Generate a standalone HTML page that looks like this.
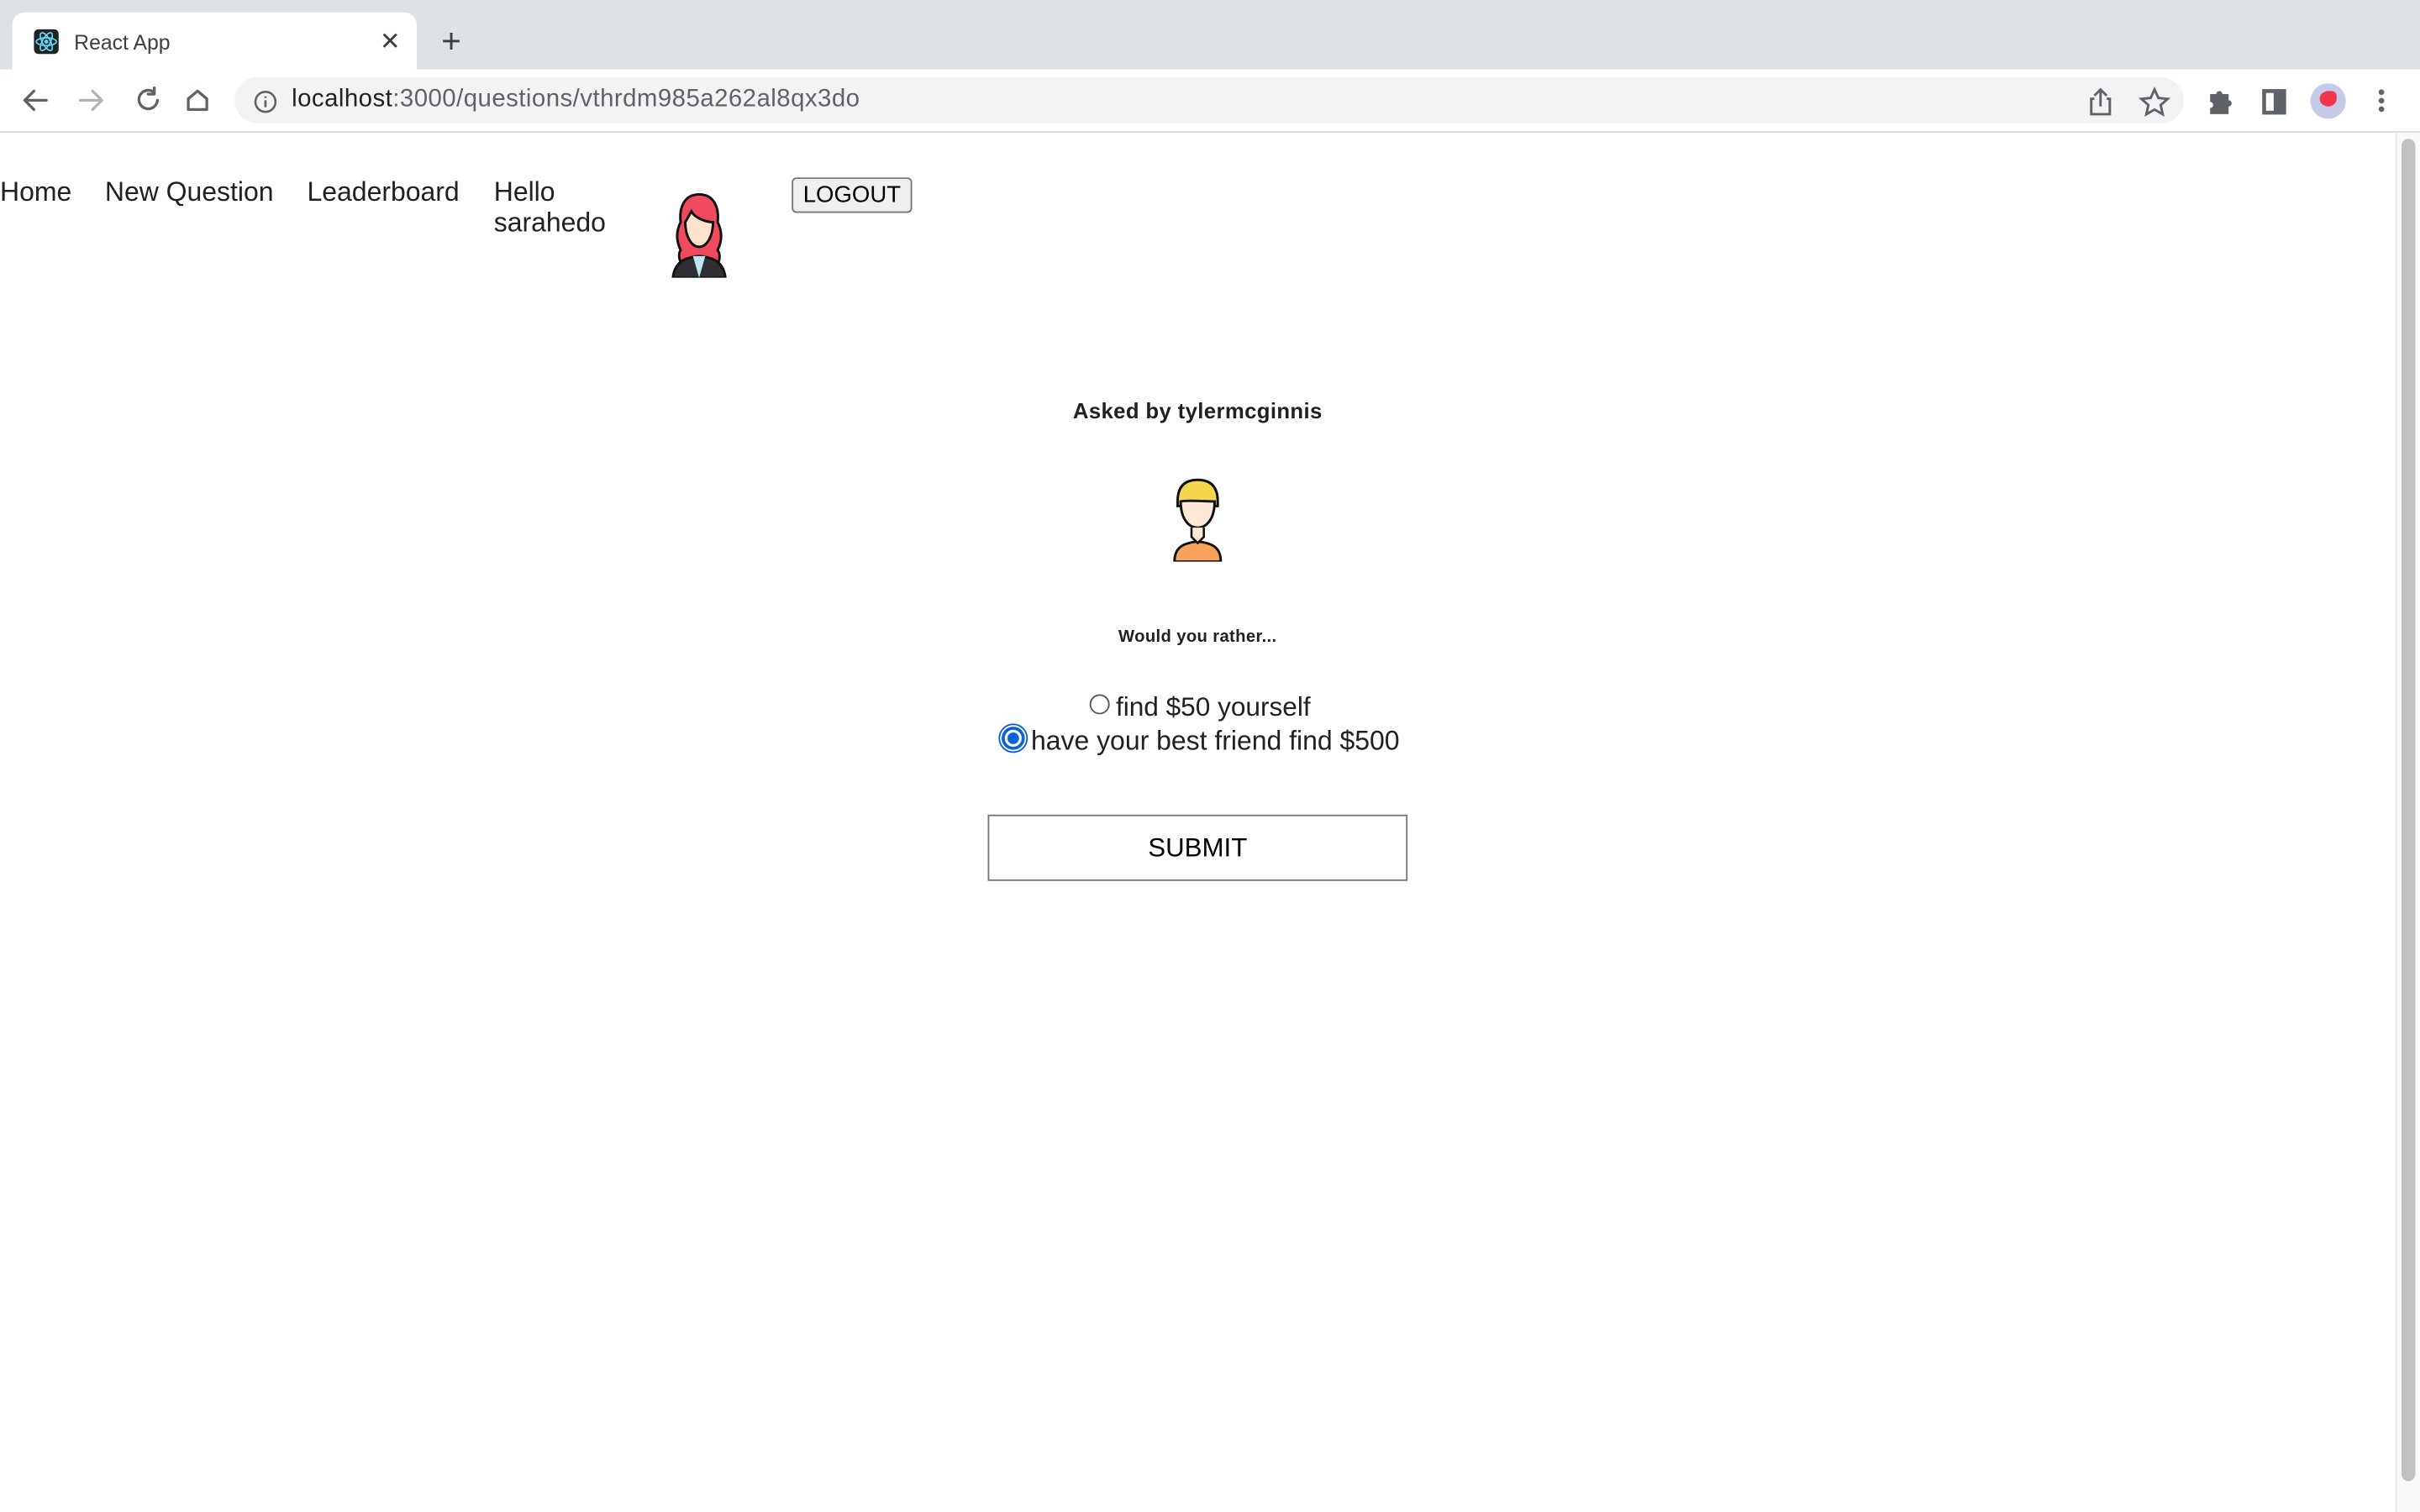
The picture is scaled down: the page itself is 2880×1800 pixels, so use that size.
<!DOCTYPE html>
<html><head><meta charset="utf-8"><style>
html,body{margin:0;padding:0;width:2880px;height:1800px;overflow:hidden;background:#fff}
#w{width:1568px;height:980px;transform:scale(1.836735);transform-origin:0 0;position:relative;font-family:"Liberation Sans",sans-serif;color:#202124}
.a{position:absolute;white-space:nowrap}
</style></head><body><div id="w">
<div class="a" style="left:0;top:0;width:1568px;height:45px;background:#dee1e6"></div>
<div class="a" style="left:8px;top:8px;width:262px;height:37px;background:#fff;border-radius:8px 8px 0 0"></div>
<div class="a" style="left:22px;top:19px;width:16px;height:16px;background:#222;border-radius:3px"></div>
<svg class="a" style="left:22px;top:19px" width="16" height="16" viewBox="0 0 16 16"><g fill="none" stroke="#61dafb" stroke-width="0.9"><ellipse cx="8" cy="8" rx="6.5" ry="2.5"/><ellipse cx="8" cy="8" rx="6.5" ry="2.5" transform="rotate(60 8 8)"/><ellipse cx="8" cy="8" rx="6.5" ry="2.5" transform="rotate(120 8 8)"/></g><circle cx="8" cy="8" r="1.3" fill="#61dafb"/></svg>
<div class="a" style="left:48px;top:20px;font-size:13.5px;color:#3c4043">React App</div>
<div class="a" style="left:246px;top:17px;font-size:16px;color:#3c4043">✕</div>
<div class="a" style="left:286px;top:14px;font-size:22px;color:#3c4043">+</div>
<div class="a" style="left:152px;top:50px;width:1263px;height:30px;background:#f1f3f4;border-radius:15px"></div>
<svg class="a" style="left:12px;top:55px" width="130" height="20" viewBox="0 0 130 20" fill="none" stroke-width="1.8" stroke-linecap="round" stroke-linejoin="round"><path d="M18 10H5M10 4L4 10l6 6" stroke="#5f6368"/><path d="M40 10h13M48 4l6 6-6 6" stroke="#b0b3b8"/><path d="M88 5a6 6 0 1 0 2 5M88 2v4h-4" stroke="#5f6368"/><path d="M110 16v-7l6-5 6 5v7z" stroke="#5f6368"/></svg>
<svg class="a" style="left:164px;top:58px" width="16" height="16"><circle cx="8" cy="8" r="6.5" fill="none" stroke="#5f6368" stroke-width="1.4"/><path d="M8 7v4.5M8 4.5v1" stroke="#5f6368" stroke-width="1.5"/></svg>
<div class="a" style="left:189px;top:56px;font-size:16px;letter-spacing:0.25px;color:#202124">localhost<span style="color:#5f6368">:3000/questions/vthrdm985a262al8qx3do</span></div>
<svg class="a" style="left:1350px;top:55px" width="210" height="22" fill="none" stroke="#5f6368" stroke-width="1.6"><path d="M7 9H5v10h12V9h-2M11 14V3M7 7l4-4 4 4"/><path d="M46 3l2.5 5.5 6 .6-4.5 4 1.3 6-5.3-3.1-5.3 3.1 1.3-6-4.5-4 6-.6z"/><path d="M82 6h4a2 2 0 0 1 4 0h4v4a2 2 0 0 1 0 4v5H82v-4a2 2 0 0 0 0-4z" fill="#5f6368" stroke="none"/><rect x="117" y="4" width="13" height="14" stroke-width="2.5"/><rect x="124" y="4" width="6" height="14" fill="#5f6368"/></svg>
<div class="a" style="left:1497px;top:54px;width:23px;height:23px;border-radius:50%;background:#c5cae9"></div>
<div class="a" style="left:1503px;top:59px;width:11px;height:10px;border-radius:50% 30% 50% 50%;background:#f2354a"></div>
<div class="a" style="left:1541px;top:57px;width:4px;height:16px;background:radial-gradient(circle,#5f6368 1.6px,transparent 2px) 0 0/4px 5.5px"></div>
<div class="a" style="left:0;top:85px;width:1568px;height:1px;background:#dadce0"></div>
<div class="a" style="left:1552px;top:86px;width:16px;height:894px;background:#fafafa;border-left:1px solid #e8e8e8"></div>
<div class="a" style="left:1556px;top:90px;width:9px;height:870px;background:#c1c1c1;border-radius:5px"></div>
<div class="a" style="left:0;top:114px;font-size:17.4px">Home</div>
<div class="a" style="left:68px;top:114px;font-size:17.4px">New Question</div>
<div class="a" style="left:199px;top:114px;font-size:17.4px">Leaderboard</div>
<div class="a" style="left:320px;top:114px;font-size:17.4px;line-height:20px">Hello<br>sarahedo</div>
<svg class="a" style="left:430px;top:124px" width="46" height="56" viewBox="0 0 46 56"><path d="M23 2c-10 0-13 9-12 18-3 6-3 12 0 18-3 5 2 12 3 13h18c3-3 6-8 3-13 3-6 3-12 0-18 1-9-2-18-12-18z" fill="#f04a5e" stroke="#111" stroke-width="1.6"/><path d="M14 20c0 9 4 16 9 16s9-7 9-16c-5 0-12-3-14-7z" fill="#fde3cc" stroke="#111" stroke-width="1.6"/><path d="M6 56c1-9 6-13 17-14 11 1 16 5 17 14z" fill="#2e2e33" stroke="#111" stroke-width="1.6"/><path d="M19 42l4 14 4-14z" fill="#bfe6f2"/></svg>
<div class="a" style="left:513px;top:115px;width:76px;height:21px;border:1px solid #767676;border-radius:3px;background:#efefef;font-size:15px;text-align:center;line-height:21px;color:#000">LOGOUT</div>
<div class="a" style="left:0;width:1552px;top:258px;text-align:center;font-size:14px;font-weight:bold;letter-spacing:0.2px">Asked by tylermcginnis</div>
<svg class="a" style="left:755px;top:308px" width="42" height="56" viewBox="0 0 42 56"><path d="M6 56c0-8 4-12 15-13 11 1 15 5 15 13z" fill="#f9a25b" stroke="#111" stroke-width="1.6"/><path d="M8 17c0-10 5-14 13-14s13 4 13 14v3H8z" fill="#f5d54b" stroke="#111" stroke-width="1.6"/><path d="M10 17c0 11 5 17 11 17s11-6 11-17c-5 0-18-1-22 0z" fill="#fde9d6" stroke="#111" stroke-width="1.6"/><path d="M17 34v6l4 4 4-4v-6" fill="#fde9d6" stroke="#111" stroke-width="1.4"/></svg>
<div class="a" style="left:0;width:1552px;top:407px;text-align:center;font-size:11px;font-weight:bold;letter-spacing:0.2px">Would you rather...</div>
<div class="a" style="left:706px;top:450px;width:11px;height:11px;border:1px solid #555;border-radius:50%"></div>
<div class="a" style="left:723px;top:448px;font-size:17.2px">find $50 yourself</div>
<div class="a" style="left:649px;top:471px;width:15px;height:15px;border:2px solid #0b61d9;border-radius:50%;box-sizing:border-box;background:radial-gradient(circle,#0b61d9 3.5px,#fff 4px)"></div>
<div class="a" style="left:647px;top:469px;width:19px;height:19px;border:1px solid #0b61d9;border-radius:50%;box-sizing:border-box"></div>
<div class="a" style="left:668px;top:470px;font-size:17.4px">have your best friend find $500</div>
<div class="a" style="left:640px;top:528px;width:270px;height:41px;border:1px solid #767676;background:#fff;font-size:17px;text-align:center;line-height:41px;color:#000">SUBMIT</div>
</div></body></html>
